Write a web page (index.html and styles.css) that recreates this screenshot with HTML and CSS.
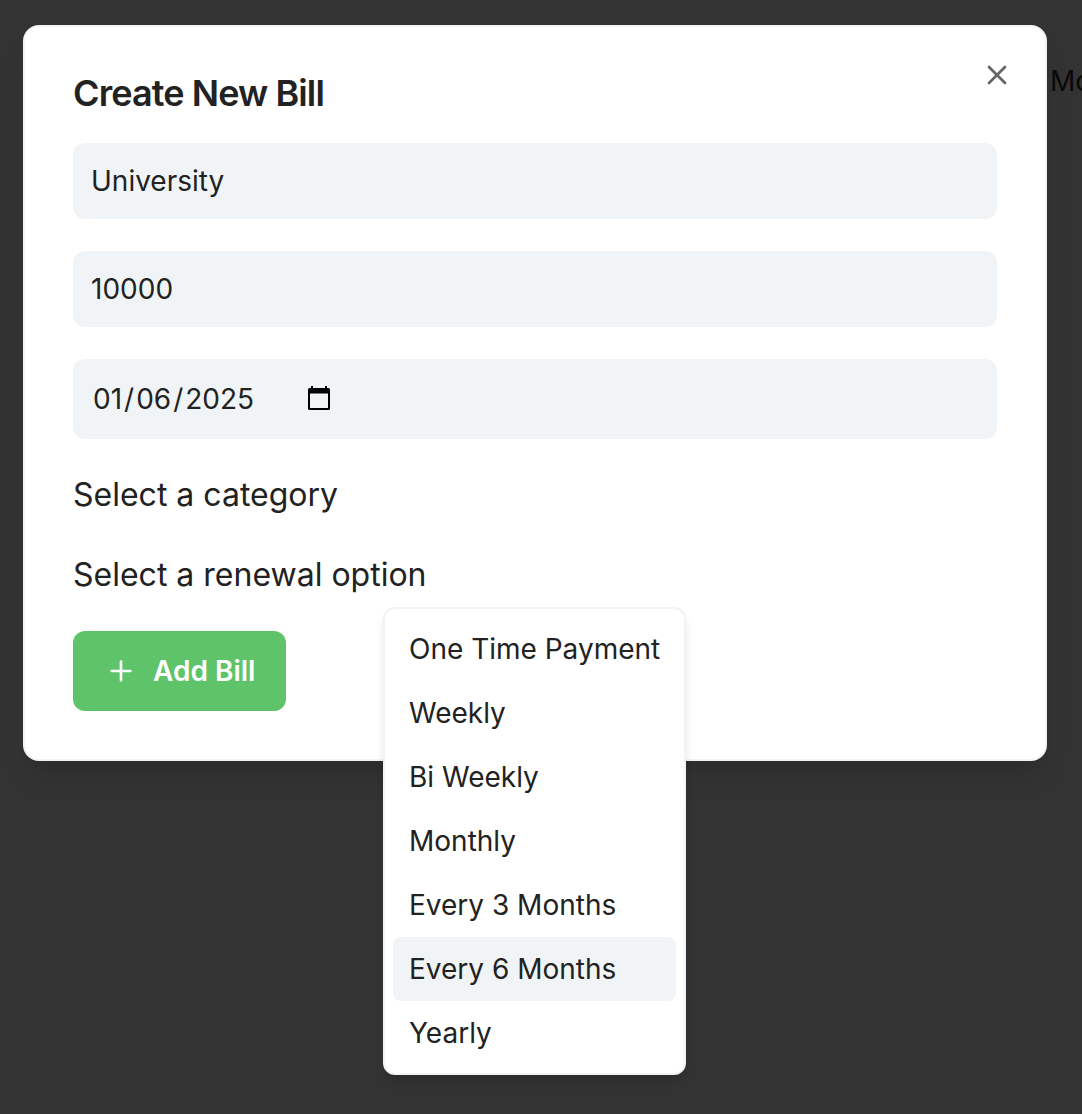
FILE: index.html
```html
<!DOCTYPE html>
<html lang="en">
<head>
<meta charset="utf-8">
<title>Create New Bill</title>
<link rel="stylesheet" href="styles.css">
</head>
<body>
<div class="page">
  <span class="page-label">Mo</span>
  <main class="dialog" role="dialog" aria-labelledby="dialog-title">
    <button class="close" type="button" aria-label="Close">
      <svg viewBox="0 0 24 24"><path d="M18 6 6 18M6 6l12 12"/></svg>
    </button>
    <h1 class="title" id="dialog-title">Create New Bill</h1>
    <div class="fields">
      <div class="field">University</div>
      <div class="field">10000</div>
      <div class="field date">
        <span class="date-text"><span>01</span><span class="slash">/</span><span>06</span><span class="slash">/</span><span>2025</span></span>
        <svg class="calendar" viewBox="0 0 22 24"><path fill-rule="evenodd" d="M3 0h2v2h12V0h2v2h1.500a1.500 1.500 0 0 1 1.500 1.500v19a1.500 1.500 0 0 1-1.500 1.500h-19A1.500 1.500 0 0 1 0 22.500v-19A1.500 1.500 0 0 1 1.500 2H3zM2 7.500V22h18V7.500z"/></svg>
      </div>
    </div>
    <div class="select">Select a category</div>
    <div class="select">Select a renewal option</div>
    <button class="add" type="button">
      <svg viewBox="0 0 24 24"><path d="M5 12h14M12 5v14"/></svg>
      <span>Add Bill</span>
    </button>
  </main>
  <ul class="menu">
    <li>One Time Payment</li>
    <li>Weekly</li>
    <li>Bi Weekly</li>
    <li>Monthly</li>
    <li>Every 3 Months</li>
    <li class="active">Every 6 Months</li>
    <li>Yearly</li>
  </ul>
</div>
</body>
</html>
```
FILE: styles.css
```css
* { box-sizing: border-box; }
body {
  margin: 0;
  background: #333;
  color: #222;
  font: 28px/40px Inter, sans-serif;
}
.page {
  position: relative;
  height: 1114px;
  padding: 25px 0 0 23px;
  overflow: hidden;
}
.page-label {
  position: absolute;
  left: 1050px;
  top: 61px;
  color: #090909;
}
.dialog {
  position: relative;
  display: flex;
  flex-direction: column;
  width: 1024px;
  height: 736px;
  padding: 48px;
  border: 2px solid #f0f4f7;
  border-radius: 16px;
  background: #fff;
  box-shadow: 0 20px 30px -6px rgba(0,0,0,.1), 0 8px 12px -8px rgba(0,0,0,.1);
}
.close {
  position: absolute;
  right: 32px;
  top: 32px;
  width: 32px;
  height: 32px;
  padding: 0;
  border: 0;
  background: none;
}
.close svg {
  display: block;
  width: 32px;
  height: 32px;
  fill: none;
  stroke: #646464;
  stroke-width: 2;
  stroke-linecap: round;
}
.title {
  margin: 0 0 32px;
  font-size: 36px;
  line-height: 36px;
  font-weight: 600;
  letter-spacing: -.025em;
}
.fields {
  display: flex;
  flex-direction: column;
  gap: 32px;
  margin-bottom: 32px;
}
.field {
  height: 76px;
  padding: 18px;
  border-radius: 12px;
  background: #f0f4f7;
}
.date {
  display: flex;
  align-items: center;
  gap: 52px;
  height: 80px;
}
.date-text span { padding: 0 2px; }
.date-text .slash { padding: 0; }
.calendar { width: 22px; height: 24px; margin-top: -2px; }
.select {
  height: 48px;
  margin-bottom: 32px;
  font-size: 32px;
  line-height: 48px;
}
.add {
  display: flex;
  flex: none;
  align-items: center;
  align-self: flex-start;
  width: 213px;
  height: 80px;
  gap: 16px;
  padding: 0 32px;
  border: 0;
  border-radius: 12px;
  background: #5fc36a;
  color: #fff;
  font: 600 28px/40px Inter, sans-serif;
  white-space: nowrap;
}
.add svg {
  flex: none;
  width: 32px;
  height: 32px;
  fill: none;
  stroke: currentColor;
  stroke-width: 2;
  stroke-linecap: round;
}
.menu {
  position: absolute;
  left: 383px;
  top: 607px;
  width: 303px;
  height: 468px;
  margin: 0;
  padding: 8px;
  list-style: none;
  border: 2px solid #f0f4f7;
  border-radius: 12px;
  background: #fff;
  box-shadow: 0 8px 12px -2px rgba(0,0,0,.1), 0 4px 8px -4px rgba(0,0,0,.1);
}
.menu li {
  height: 64px;
  padding: 12px 16px;
  border-radius: 8px;
  white-space: nowrap;
}
.menu .active { background: #f0f4f7; }
```
